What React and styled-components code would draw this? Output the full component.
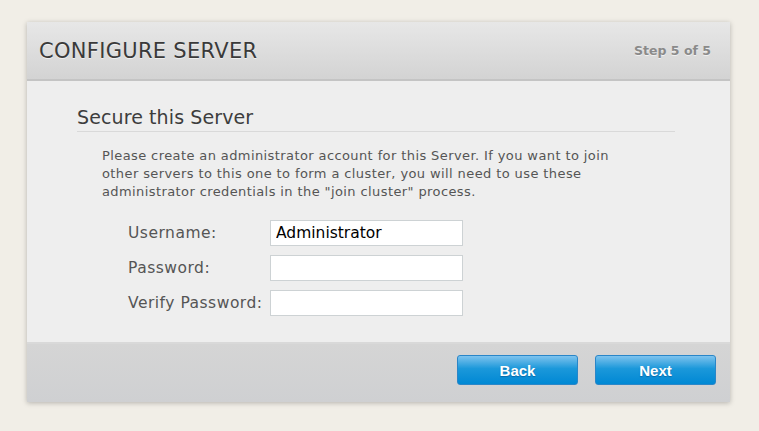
import React from 'react';
import styled, { createGlobalStyle } from 'styled-components';

const GlobalStyle = createGlobalStyle`
	html, body {
		margin: 0;
		padding: 0;
		background: #f1eee7;
	}
	body {
		font-family: 'DejaVu Sans', Verdana, sans-serif;
	}
`;

const Page = styled.div`
	width: 759px;
	height: 431px;
	padding: 22px 0 0 27px;
	box-sizing: border-box;
`;

const Panel = styled.div`
	width: 703px;
	display: flex;
	flex-direction: column;
	background: #eeeeee;
	box-shadow: 0 1px 5px rgba(0, 0, 0, 0.25);
`;

const Header = styled.div`
	height: 57px;
	display: flex;
	align-items: center;
	justify-content: space-between;
	padding: 0 19px 0 12px;
	background: linear-gradient(#e7e7e7, #d3d3d3);
	border-bottom: 2px solid #c4c4c4;
`;

const Title = styled.h1`
	margin: 0;
	font-size: 21px;
	letter-spacing: 0.3px;
	font-weight: normal;
	color: #3a3a3a;
	text-shadow: 0 1px 0 rgba(255, 255, 255, 0.6);
`;

const StepLabel = styled.span`
	font-size: 12.5px;
	font-weight: bold;
	color: #8a8a8a;
	text-shadow: 0 1px 0 rgba(255, 255, 255, 0.6);
`;

const Body = styled.div`
	padding: 25px 55px 26px 50px;
`;

const SectionTitle = styled.h2`
	margin: 0;
	padding-bottom: 3px;
	font-size: 19px;
	letter-spacing: 0.1px;
	font-weight: normal;
	color: #3d3d3d;
	border-bottom: 1px solid #d9d9d9;
`;

const Intro = styled.p`
	margin: 15px 0 0 25px;
	width: 540px;
	font-size: 13px;
	letter-spacing: 0.4px;
	line-height: 18px;
	color: #555555;
`;

const Form = styled.div`
	margin: 19px 0 0 51px;
	display: grid;
	grid-template-columns: 142px 193px;
	row-gap: 9px;
	align-items: center;
`;

const Label = styled.label`
	font-size: 15.5px;
	letter-spacing: 0.5px;
	color: #555555;
`;

const Field = styled.input`
	box-sizing: border-box;
	width: 193px;
	height: 26px;
	margin: 0;
	padding: 0 5px;
	border: 1px solid #cdd2d4;
	background: #ffffff;
	font-family: 'DejaVu Sans', Verdana, sans-serif;
	font-size: 15.5px;
	color: #000000;
	outline: none;
`;

const Footer = styled.div`
	height: 60px;
	display: flex;
	align-items: flex-start;
	justify-content: flex-end;
	gap: 17px;
	padding: 11px 14px 0 0;
	box-sizing: border-box;
	background: linear-gradient(#d5d5d5, #cfd0d2);
	border-top: 2px solid #d9d9d9;
`;

const Button = styled.button`
	width: 121px;
	height: 30px;
	border: 1px solid #2a86c8;
	border-radius: 3px;
	background: linear-gradient(#7ec3ee, #1b98da 45%, #0088d4);
	font-family: 'Liberation Sans', Arial, sans-serif;
	font-size: 15px;
	font-weight: bold;
	color: #ffffff;
	text-shadow: 0 1px 1px rgba(0, 60, 110, 0.45);
	cursor: pointer;
`;

export default function App() {
	return (
		<>
			<GlobalStyle />
			<Page>
				<Panel>
					<Header>
						<Title>CONFIGURE SERVER</Title>
						<StepLabel>Step 5 of 5</StepLabel>
					</Header>
					<Body>
						<SectionTitle>Secure this Server</SectionTitle>
						<Intro>
							Please create an administrator account for this Server. If you want to join
							other servers to this one to form a cluster, you will need to use these
							administrator credentials in the "join cluster" process.
						</Intro>
						<Form>
							<Label>Username:</Label>
							<Field type="text" defaultValue="Administrator" />
							<Label>Password:</Label>
							<Field type="password" />
							<Label>Verify Password:</Label>
							<Field type="password" />
						</Form>
					</Body>
					<Footer>
						<Button>Back</Button>
						<Button>Next</Button>
					</Footer>
				</Panel>
			</Page>
		</>
	);
}
